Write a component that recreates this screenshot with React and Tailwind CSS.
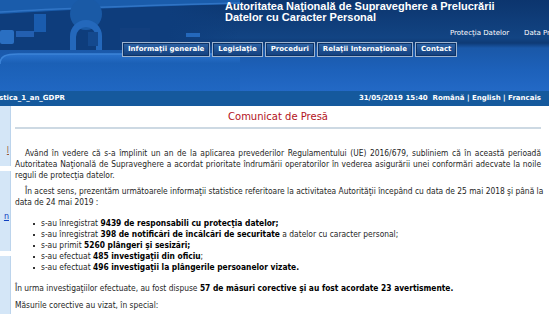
import React from 'react'

const navItems = ['Informaţii generale', 'Legislaţie', 'Proceduri', 'Relaţii Internaţionale', 'Contact']

const HeaderArt = () => (
  <svg className="absolute left-0 top-0" width="240" height="91" viewBox="0 0 240 91">
    <defs>
      <linearGradient id="slab" x1="0" y1="0" x2="0" y2="1">
        <stop offset="0" stopColor="#2a72cc" />
        <stop offset="0.25" stopColor="#1b60b6" />
        <stop offset="1" stopColor="#2067c2" />
      </linearGradient>
      <linearGradient id="fade" x1="0" y1="0" x2="1" y2="0">
        <stop offset="0.7" stopColor="#0e3d7c" stopOpacity="1" />
        <stop offset="1" stopColor="#0e3d7c" stopOpacity="0" />
      </linearGradient>
    </defs>
    <rect x="0" y="0" width="240" height="50" fill="url(#fade)" />
    <path d="M0 0 H240 V4 C170 6 90 8 0 14 Z" fill="#1a5cab" />
    <path d="M0 12 C80 7 160 5 240 3" stroke="#3a7fd0" strokeWidth="1.5" fill="none" opacity="0.7" />
    <circle cx="86" cy="14" r="16" fill="#1a5aa6" />
    <path d="M70 50 V36 A16 16 0 0 1 102 36 V50 H96 V37 A10 10 0 0 0 76 37 V50 Z" fill="#2468bb" />
    <rect x="34" y="14" width="12" height="18" fill="#1a5cae" />
    <rect x="0" y="30" width="14" height="14" rx="2" fill="#2a6fc2" />
    <rect x="16" y="31" width="18" height="6" fill="#235fb0" />
    <rect x="88" y="32" width="10" height="14" fill="#14498e" />
    <rect x="120" y="28" width="30" height="14" fill="#123f7e" />
    <rect x="186" y="33" width="14" height="4" fill="#2468bb" />
    <path d="M0 64 C0 56 6 54 18 54 H240 V91 H0 Z" fill="url(#slab)" />
    <path d="M0 64 C0 56 6 54 18 54 H240" stroke="#3c84d8" strokeWidth="1.5" fill="none" />
  </svg>
)

const Header = () => (
  <header className="relative h-[91px] overflow-hidden bg-[linear-gradient(180deg,#0c356e_0px,#124483_38px,#0e3a75_43px,#1a58a8_48px,#1d61ba_70px,#2369c6_91px)]">
    <HeaderArt />
    <div className="relative flex flex-col">
      <h1 className="pl-[225px] pt-[1px] font-['Liberation_Sans',Arial,sans-serif] text-[11px] font-bold leading-[11px] text-white">
        Autoritatea Naţională de Supraveghere a Prelucrării
        <br />
        Datelor cu Caracter Personal
      </h1>
      <div className="mt-[6px] flex gap-[15px] whitespace-nowrap pl-[450px] text-[7px] leading-[9px] text-white">
        <span>Protecţia Datelor</span>
        <span>Data Protection</span>
      </div>
      <nav className="mt-[4px] flex gap-[2px] pl-[122px]">
        {navItems.map((item) => (
          <span
            key={item}
            className="flex h-[15px] items-center border border-[#9db3cf] bg-[linear-gradient(180deg,#2e64a6,#123f7e)] px-[5px] text-[7px] font-bold whitespace-nowrap text-white shadow-[inset_0_0_0_1px_#0c3266]"
          >
            {item}
          </span>
        ))}
      </nav>
    </div>
  </header>
)

const Breadcrumb = () => (
  <div className="flex h-[15px] items-center justify-between bg-[#15599d] pr-[8px] text-[7px] font-bold whitespace-nowrap text-white">
    <span className="-ml-[1px]">stica_1_an_GDPR</span>
    <span>
      31/05/2019 15:40&nbsp;&nbsp;Română | English | Francais
    </span>
  </div>
)

const Sidebar = () => (
  <aside className="flex w-[11px] shrink-0 flex-col gap-[5px] text-[8px] leading-[10px]">
    <div className="flex h-[60px] items-end justify-end overflow-hidden border-r border-[#bcd4ec] bg-[#d4e6f7] pb-[10px] pr-[1px]">
      <span className="text-[#9a5a3a] underline">l</span>
    </div>
    <div className="flex h-[80px] items-center justify-end overflow-hidden border-r border-[#bcd4ec] bg-[#d4e6f7] pt-[12px] pr-[1px]">
      <span className="text-[#1040c0] underline">n</span>
    </div>
    <div className="h-[80px] border-r border-[#bcd4ec] bg-[#d4e6f7]" />
  </aside>
)

const items = [
  [['s-au înregistrat ', false], ['9439 de responsabili cu protecţia datelor;', true]],
  [['s-au înregistrat ', false], ['398 de notificări de încălcări de securitate', true], [' a datelor cu caracter personal;', false]],
  [['s-au primit ', false], ['5260 plângeri şi sesizări;', true]],
  [['s-au efectuat ', false], ['485 investigaţii din oficiu', true], [';', false]],
  [['s-au efectuat ', false], ['496 investigaţii la plângerile persoanelor vizate.', true]],
]

// justified lines, broken where the original page breaks them
const Lines = ({ lines, className }) => (
  <p className={className}>
    {lines.map((line, i) => (
      <span
        key={i}
        className={`block whitespace-nowrap ${i === 0 ? 'pl-[10px]' : ''} ${i < lines.length - 1 ? 'text-justify [text-align-last:justify]' : ''}`}
      >
        {line}
      </span>
    ))}
  </p>
)

export default function App() {
  return (
    <div className="h-[314px] w-[549px] overflow-hidden bg-white font-['DejaVu_Sans',Verdana,sans-serif]">
      <Header />
      <Breadcrumb />
      <div className="flex">
        <Sidebar />
        <main className="min-w-0 flex-1 pl-[4px] pr-[8px] font-['DejaVu_Sans_Condensed','DejaVu_Sans',sans-serif] text-[8.35px] leading-[11px] text-[#1e1e1e] [font-stretch:condensed]">
          <h2 className="pt-[5px] text-center font-['DejaVu_Sans',sans-serif] text-[10px] leading-[12px] text-[#b3121c] [font-stretch:normal]">
            Comunicat de Presă
          </h2>
          <div className="mt-[4px] h-[2px] bg-[#cdd9e3]" />
          <Lines
            className="mt-[19px]"
            lines={[
              'Având în vedere că s-a împlinit un an de la aplicarea prevederilor Regulamentului (UE) 2016/679, subliniem că în această perioadă',
              'Autoritatea Naţională de Supraveghere a acordat prioritate îndrumării operatorilor în vederea asigurării unei conformări adecvate la noile',
              'reguli de protecţia datelor.',
            ]}
          />
          <Lines
            className="mt-[5px]"
            lines={[
              'În acest sens, prezentăm următoarele informaţii statistice referitoare la activitatea Autorităţii începând cu data de 25 mai 2018 şi până la',
              'data de 24 mai 2019 :',
            ]}
          />
          <ul className="mt-[10px] flex flex-col">
            {items.map((parts, i) => (
              <li key={i} className="flex items-center gap-[6px] pl-[18px]">
                <span className="h-[2px] w-[2px] bg-[#333]" />
                <span>
                  {parts.map(([t, b], j) => (
                    <span key={j} className={b ? 'font-bold text-black' : ''}>{t}</span>
                  ))}
                </span>
              </li>
            ))}
          </ul>
          <p className="mt-[10px]">
            În urma investigaţiilor efectuate, au fost dispuse{' '}
            <span className="font-bold text-black">57 de măsuri corective şi au fost acordate 23 avertismente.</span>
          </p>
          <p className="mt-[6px]">Măsurile corective au vizat, în special:</p>
        </main>
      </div>
    </div>
  )
}
